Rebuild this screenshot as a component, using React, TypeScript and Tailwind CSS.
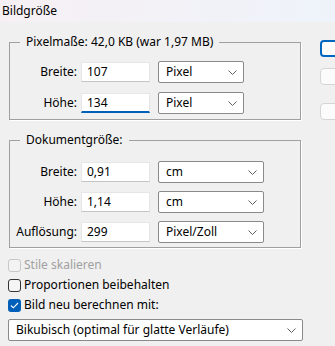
import React from "react";

const font = { fontFamily: '"Segoe UI", "Noto Sans", "Open Sans", sans-serif' };

function Chevron() {
  return (
    <svg width="9" height="5" viewBox="0 0 9 5" className="shrink-0">
      <polyline points="0.5,0.5 4.5,4.5 8.5,0.5" fill="none" stroke="#5f5f5f" strokeWidth="1" />
    </svg>
  );
}

function Select({ value, w }: { value: string; w: string }) {
  return (
    <div
      className={`${w} h-[22px] bg-white border border-[#8a8a8a] rounded-[2px] flex items-center justify-between pl-[7px] pr-[6px] text-[12px] text-black`}
    >
      <span>{value}</span>
      <Chevron />
    </div>
  );
}

function Input({ value, focused }: { value: string; focused?: boolean }) {
  return (
    <div
      className={`w-[69px] h-[20px] bg-white border border-[#e6e6e6] ${
        focused ? "border-b-2 border-b-[#005fb8]" : "border-b-[#c4c4c4]"
      } flex items-center pl-[5px] text-[12px] text-black`}
    >
      {value}
    </div>
  );
}

function Row({ label, value, unit, w, focused }: { label: string; value: string; unit: string; w: string; focused?: boolean }) {
  return (
    <div className="flex items-center h-[22px]">
      <div className="w-[67px] text-right text-[12px] text-black">{label}</div>
      <div className="ml-[4px]">
        <Input value={value} focused={focused} />
      </div>
      <div className="ml-[8px]">
        <Select value={unit} w={w} />
      </div>
    </div>
  );
}

function Check({ label, state }: { label: string; state: "disabled" | "off" | "on" }) {
  return (
    <div className="flex items-center h-[20px]">
      {state === "on" ? (
        <div className="w-[13px] h-[13px] rounded-[3px] bg-[#005fb8] flex items-center justify-center">
          <svg width="9" height="7" viewBox="0 0 9 7">
            <polyline points="1,3.5 3.3,5.8 8,1" fill="none" stroke="white" strokeWidth="1.1" />
          </svg>
        </div>
      ) : (
        <div
          className={`w-[13px] h-[13px] rounded-[3px] border ${
            state === "disabled" ? "border-[#c8c8c8] bg-[#f3f3f3]" : "border-[#333333] bg-[#f5f5f5]"
          }`}
        />
      )}
      <span className={`ml-[3px] text-[12px] ${state === "disabled" ? "text-[#a0a0a0]" : "text-black"}`}>{label}</span>
    </div>
  );
}

export default function App() {
  return (
    <div className="w-[335px] h-[346px] bg-[#f0f0f0] overflow-hidden" style={font}>
      <div className="h-[22px] bg-gradient-to-r from-[#f6f0f4] to-[#eef3fa] pl-[2px] flex items-center text-[12px] text-black">
        Bildgröße
      </div>
      <div className="flex">
        <div className="ml-[8px] w-[295px] flex flex-col">
          <fieldset className="mt-[12px] ml-[1px] w-[292px] border border-[#a0a0a0] shadow-[1px_1px_0_#ffffff] pb-[5px]">
            <legend className="ml-[10px] px-[6px] text-[12px] leading-[16px] text-black">
              Pixelmaße: 42,0 KB (war 1,97 MB)
            </legend>
            <div className="mt-[11px] flex flex-col gap-[9px]">
              <Row label="Breite:" value="107" unit="Pixel" w="w-[86px]" />
              <Row label="Höhe:" value="134" unit="Pixel" w="w-[86px]" focused />
            </div>
          </fieldset>
          <fieldset className="mt-[12px] ml-[1px] w-[292px] border border-[#a0a0a0] shadow-[1px_1px_0_#ffffff] pb-[4px]">
            <legend className="ml-[10px] px-[6px] text-[12px] leading-[16px] text-black">Dokumentgröße:</legend>
            <div className="mt-[13px] flex flex-col gap-[8px]">
              <Row label="Breite:" value="0,91" unit="cm" w="w-[106px]" />
              <Row label="Höhe:" value="1,14" unit="cm" w="w-[106px]" />
              <Row label="Auflösung:" value="299" unit="Pixel/Zoll" w="w-[106px]" />
            </div>
          </fieldset>
          <div className="mt-[7px] flex flex-col">
            <Check label="Stile skalieren" state="disabled" />
            <Check label="Proportionen beibehalten" state="off" />
            <Check label="Bild neu berechnen mit:" state="on" />
          </div>
          <div className="mt-[4px]">
            <Select value="Bikubisch (optimal für glatte Verläufe)" w="w-[295px]" />
          </div>
        </div>
        <div className="ml-[17px] pt-[18px] flex flex-col w-[80px] shrink-0">
          <div className="h-[17px] rounded-[4px] border-2 border-[#0067c0] bg-[#fdfdfd]" />
          <div className="mt-[11px] h-[17px] rounded-[4px] border border-[#d5d5d5] bg-[#fbfbfb]" />
          <div className="mt-[18px] h-[17px] rounded-[4px] border border-[#d5d5d5] bg-[#fbfbfb]" />
        </div>
      </div>
    </div>
  );
}
